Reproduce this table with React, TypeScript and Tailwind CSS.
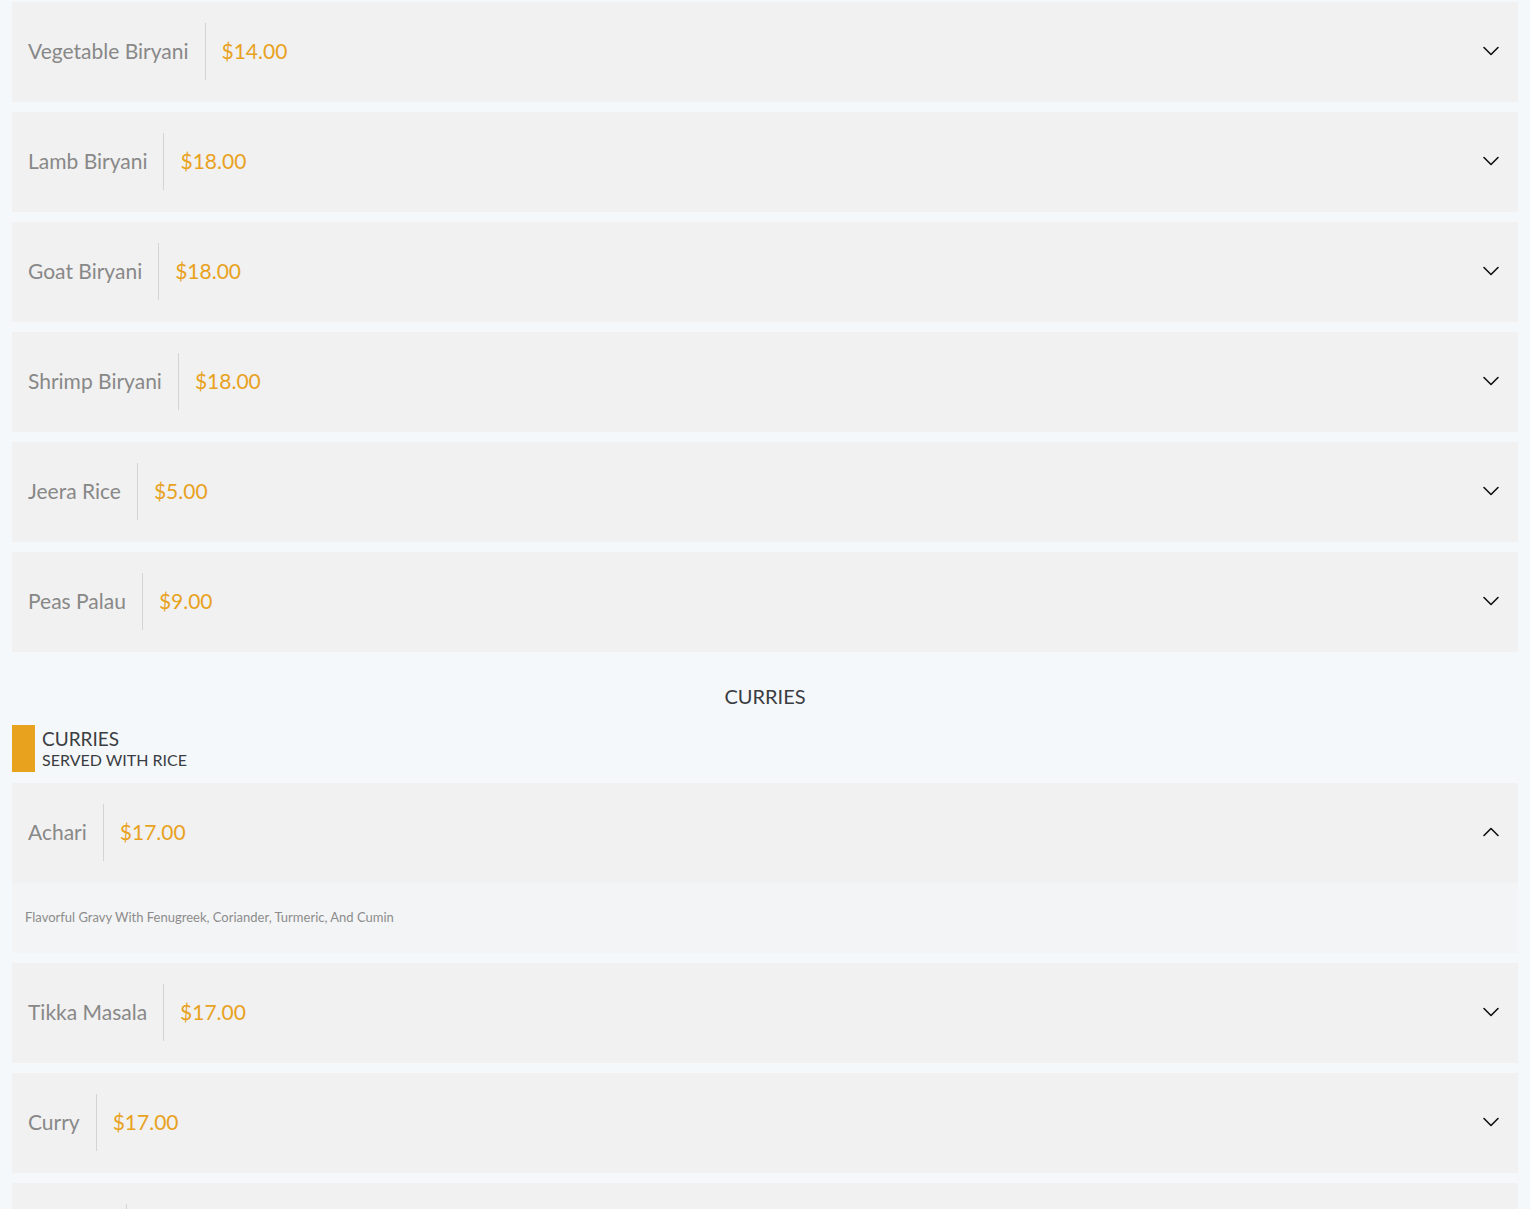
import { useState } from "react";

interface MenuItem {
  name: string;
  price: string;
  description?: string;
}

const biryani: MenuItem[] = [
  { name: "Vegetable Biryani", price: "$14.00" },
  { name: "Lamb Biryani", price: "$18.00" },
  { name: "Goat Biryani", price: "$18.00" },
  { name: "Shrimp Biryani", price: "$18.00" },
  { name: "Jeera Rice", price: "$5.00" },
  { name: "Peas Palau", price: "$9.00" },
];

const curries: MenuItem[] = [
  {
    name: "Achari",
    price: "$17.00",
    description: "Flavorful Gravy With Fenugreek, Coriander, Turmeric, And Cumin",
  },
  { name: "Tikka Masala", price: "$17.00" },
  { name: "Curry", price: "$17.00" },
  { name: "Vindaloo", price: "$17.00" },
];

function Chevron({ up }: { up: boolean }) {
  return (
    <svg width="18" height="10" viewBox="0 0 18 10" fill="none" className="shrink-0">
      <path
        d={up ? "M2 8.5 L9 1.5 L16 8.5" : "M2 1.5 L9 8.5 L16 1.5"}
        stroke="#111"
        strokeWidth="1.6"
        strokeLinecap="round"
        strokeLinejoin="round"
      />
    </svg>
  );
}

function AccordionItem({ item, defaultOpen = false }: { item: MenuItem; defaultOpen?: boolean }) {
  const [open, setOpen] = useState(defaultOpen);

  return (
    <div className="bg-[#f1f1f1]">
      <button
        type="button"
        onClick={() => setOpen(!open)}
        className="flex h-[100px] w-full items-center pb-[2px] pl-4 pr-[18px] text-left"
      >
        <span className="pr-4 text-[21px] text-[#888888]">{item.name}</span>
        <span className="h-[57px] w-px bg-[#d4d4d4]" />
        <span className="flex-1 pl-4 text-[21px] text-[#e8a21e]">{item.price}</span>
        <Chevron up={open} />
      </button>
      {open && (
        <div className="flex h-[70px] items-center bg-[#f3f4f5] px-[13px] text-[13px] text-[#8c8c8c]">
          {item.description}
        </div>
      )}
    </div>
  );
}

export default function App() {
  return (
    <div className="min-h-[1209px] bg-[#f5f8fb] px-3 pt-[2px] font-['Lato',sans-serif]">
      <div className="flex flex-col gap-[10px]">
        {biryani.map((item) => (
          <AccordionItem key={item.name} item={item} />
        ))}
      </div>

      <h2 className="mt-8 text-center text-[20px] leading-6 text-[#3a3d42]">CURRIES</h2>

      <div className="mt-[17px] flex h-[47px] items-stretch gap-[7px]">
        <div className="w-[23px] bg-[#e8a21e]" />
        <div className="flex flex-col justify-center text-[#3a3d42]">
          <span className="text-[19px] leading-[22px]">CURRIES</span>
          <span className="text-[16px] leading-[20px]">SERVED WITH RICE</span>
        </div>
      </div>

      <div className="mt-[11px] flex flex-col gap-[10px]">
        {curries.map((item, i) => (
          <AccordionItem key={item.name} item={item} defaultOpen={i === 0} />
        ))}
      </div>
    </div>
  );
}
